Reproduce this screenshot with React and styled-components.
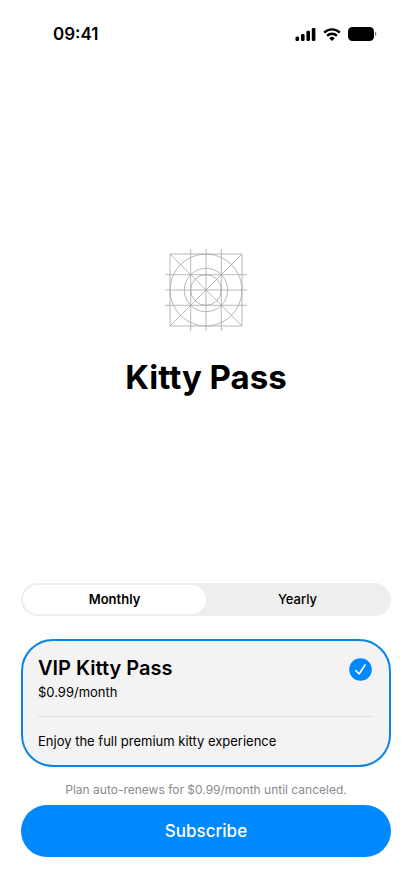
import React from 'react'
import styled, { createGlobalStyle } from 'styled-components'

const GlobalStyle = createGlobalStyle`
    * {
        box-sizing: border-box;
    }
    body {
        margin: 0;
        background-color: #fff;
        color: #000;
        font-family: Inter, "Liberation Sans", sans-serif;
    }
`
const Container = styled.div`
    min-height: 100vh;
    display: flex;
    flex-direction: column;
`
const StatusBar = styled.header`
    display: flex;
    align-items: center;
    justify-content: space-between;
    height: 68px;
    padding: 0 35px 0 53px;
`
const Time = styled.time`
    font-size: 17px;
    font-weight: 600;
    line-height: 20px;
`
const StatusIcons = styled.div`
    display: flex;
    align-items: center;
    gap: 7px;

    svg {
        display: block;
    }
`
const Hero = styled.main`
    flex: 1;
    display: flex;
    flex-direction: column;
    align-items: center;
    justify-content: center;
    gap: 24px;
    padding-bottom: 4px;
`
const Title = styled.h1`
    margin: 0;
    font-size: 33px;
    font-weight: 700;
    line-height: 44px;
`
const Form = styled.form`
    display: flex;
    flex-direction: column;
    padding: 0 21px 39px;
`
const HiddenInput = styled.input`
    position: absolute;
    opacity: 0;
    pointer-events: none;
`
const Segmented = styled.fieldset`
    display: flex;
    min-width: 0;
    margin: 0 0 23px;
    padding: 2px;
    border: none;
    border-radius: 17px;
    background-color: #eee;
`
const Segment = styled.label`
    flex: 1;
    cursor: pointer;
`
const SegmentText = styled.span`
    display: block;
    border-radius: 15px;
    font-size: 13px;
    font-weight: 500;
    line-height: 29px;
    text-align: center;

    input:checked + & {
        background-color: #fff;
        font-weight: 600;
    }
`
const Plan = styled.label`
    display: block;
    padding: 14px 17px 14px 15px;
    border: 2px solid #0a84e8;
    border-radius: 32px;
    background-color: #f3f3f3;
    cursor: pointer;
`
const PlanTop = styled.div`
    display: flex;
    justify-content: space-between;
    padding-bottom: 14px;
    border-bottom: 1px solid #dedede;
`
const PlanName = styled.h2`
    margin: 0 0 1px;
    font-size: 20px;
    font-weight: 600;
    line-height: 26px;
`
const PlanText = styled.p`
    margin: 0;
    font-size: 13px;
    line-height: 20px;
`
const PlanDesc = styled(PlanText)`
    margin-top: 14px;
`
const Check = styled.svg`
    display: block;
    margin-top: 3px;
`
const Notice = styled.p`
    margin: 13px 0 5px;
    color: #8a8a8e;
    font-size: 12px;
    line-height: 20px;
    text-align: center;
`
const Button = styled.button`
    height: 52px;
    border: none;
    border-radius: 26px;
    background-color: #0088ff;
    color: #fff;
    font-family: inherit;
    font-size: 17px;
    font-weight: 500;
    cursor: pointer;
`

const SignalIcon = () => (
    <svg width="21" height="13" viewBox="0 0 21 13" aria-hidden="true">
        <rect x="0.5" y="8.4" width="3.6" height="4.6" rx="1.3" />
        <rect x="6" y="5.9" width="3.6" height="7.1" rx="1.3" />
        <rect x="11.4" y="2.8" width="3.6" height="10.2" rx="1.3" />
        <rect x="16.8" y="0" width="3.6" height="13" rx="1.3" />
    </svg>
)

const WifiIcon = () => (
    <svg width="18" height="13" viewBox="0 0 18 13" aria-hidden="true">
        <g fill="none" stroke="#000" strokeWidth="2.4">
            <path d="M1.2 4.6A11.1 11.1 0 0 1 16.8 4.6" />
            <path d="M4.1 7.8A7 7 0 0 1 13.9 7.8" />
        </g>
        <path d="M9 13L6.2 10.2A4 4 0 0 1 11.8 10.2Z" />
    </svg>
)

const BatteryIcon = () => (
    <svg width="29" height="14" viewBox="0 0 29 14" aria-hidden="true">
        <rect width="26" height="14" rx="4.4" />
        <path d="M27 4.8C28.8 5.4 28.8 8.6 27 9.2Z" fill="#777" />
    </svg>
)

const GridLogo = () => (
    <svg width="82" height="82" viewBox="0 0 82 82" fill="none" stroke="#a6a6a6" strokeWidth="0.8" aria-hidden="true">
        <rect x="5" y="5" width="72" height="72" rx="0.5" />
        <circle cx="41" cy="41" r="36" />
        <circle cx="41" cy="41" r="21.7" />
        <circle cx="41" cy="41" r="15.3" />
        <path d="M5 5L77 77M77 5L5 77" />
        <path d="M25.7 0V82M41 0V82M56.3 0V82" />
        <path d="M0 25.7H82M0 41H82M0 56.3H82" />
    </svg>
)

const CheckIcon = () => (
    <Check width="23" height="23" viewBox="0 0 23 23" aria-hidden="true">
        <circle cx="11.5" cy="11.5" r="11.3" fill="#0088ff" />
        <path d="M6.8 12.5L10.1 16L16 7" fill="none" stroke="#fff" strokeWidth="1.6" strokeLinecap="round" strokeLinejoin="round" />
    </Check>
)

const periods = ["Monthly", "Yearly"]

const App = () => {
    return (
        <Container>
            <GlobalStyle />
            <StatusBar>
                <Time>09:41</Time>
                <StatusIcons>
                    <SignalIcon />
                    <WifiIcon />
                    <BatteryIcon />
                </StatusIcons>
            </StatusBar>
            <Hero>
                <GridLogo />
                <Title>Kitty Pass</Title>
            </Hero>
            <Form onSubmit={(e) => e.preventDefault()}>
                <Segmented aria-label="Billing period">
                    {periods.map((period, i) => (
                        <Segment key={period}>
                            <HiddenInput type="radio" name="period" value={period} defaultChecked={i === 0} />
                            <SegmentText>{period}</SegmentText>
                        </Segment>
                    ))}
                </Segmented>
                <Plan>
                    <HiddenInput type="radio" name="plan" value="vip" defaultChecked />
                    <PlanTop>
                        <div>
                            <PlanName>VIP Kitty Pass</PlanName>
                            <PlanText>$0.99/month</PlanText>
                        </div>
                        <CheckIcon />
                    </PlanTop>
                    <PlanDesc>Enjoy the full premium kitty experience</PlanDesc>
                </Plan>
                <Notice>Plan auto-renews for $0.99/month until canceled.</Notice>
                <Button type="submit">Subscribe</Button>
            </Form>
        </Container>
    )
}

export default App
